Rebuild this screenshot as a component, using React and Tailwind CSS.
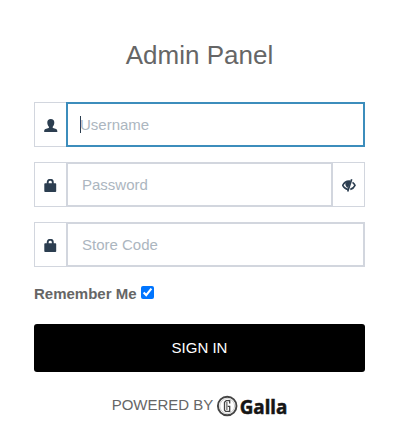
import React from "react";

function UserIcon() {
  return (
    <svg width="14" height="14" viewBox="0 0 14 14" fill="currentColor" className="block shrink-0">
      <path d="M6.800 0c2.300 0 3.500 1.300 3.500 3.500 0 1.700-.6 3-1.400 3.900-.4.500-.3 1.200.2 1.500l3 1.200c.8.400 1.200 1.100 1.200 2V13H.2v-.9c0-.9.5-1.600 1.300-2l3.100-1.200c.5-.3.5-1 .1-1.500-.8-.9-1.400-2.200-1.400-3.900C3.300 1.300 4.500 0 6.800 0z" />
    </svg>
  );
}

function LockIcon() {
  return (
    <svg width="14" height="14" viewBox="0 0 14 14" className="block shrink-0">
      <path d="M3.700 5.200V3.400C3.700 1.800 4.500.9 5.700.9h1c1.200 0 2.100.9 2.100 2.500v1.800" fill="none" stroke="currentColor" strokeWidth="1.900" />
      <path d="M1.100 4.200h10.300c.5 0 .8.400.8.900V12c0 .7-.5 1-1.100 1H1.400c-.6 0-1.100-.3-1.100-1V5.100c0-.5.3-.9.800-.9z" fill="currentColor" />
    </svg>
  );
}

function EyeIcon() {
  return (
    <svg width="14" height="14" viewBox="0 0 14 14" fill="none" stroke="currentColor" className="block shrink-0">
      <path d="M8.400 2.200C4.800 1.800 1.900 3.600.7 6.400c1.200 2.400 3 3.700 5.300 4.100" strokeWidth="1.600" />
      <path d="M10.500 3.300c1.200.8 2 1.800 2.500 3.100-1 2.200-2.600 3.500-4.700 4" strokeWidth="1.600" />
      <path d="M3.500 3.300c-.6 2.800.3 4.700 2.500 5.700l2.800-6.500z" fill="currentColor" stroke="none" />
      <path d="M9.700.3 5.700 12.400" strokeWidth="1.700" />
    </svg>
  );
}

function Addon({ children, end }) {
  return (
    <div className={`flex w-8 shrink-0 items-center border-y border-[#d2d6de] pt-[3px] text-[#2c3e50] ${end ? "border-r pl-[9px]" : "border-l pl-[9px]"}`}>
      {children}
    </div>
  );
}

function Field({ icon, placeholder, focused, end }) {
  return (
    <div className="flex h-[45px]">
      <Addon>{icon}</Addon>
      <div className={`flex min-w-0 flex-1 items-center border-2 ${focused ? "border-[#3c8dbc] pl-3" : "border-[#d2d6de] pl-[14px]"}`}>
        {focused && <span className="-mr-px h-[17px] w-px bg-[#2c3e50]" />}
        <input
          type="text"
          placeholder={placeholder}
          className="w-full min-w-0 bg-transparent pt-[2px] text-[15px] text-[#2c3e50] outline-none placeholder:text-[#acb6c0]"
        />
      </div>
      {end && <Addon end>{end}</Addon>}
    </div>
  );
}

function GallaLogo() {
  return (
    <span className="ml-[3px] flex h-[22px] shrink-0 items-center">
      <svg width="22" height="22" viewBox="0 0 22 22" className="block shrink-0">
        <circle cx="11.200" cy="11" r="9.300" fill="#fff" stroke="#444" strokeWidth="1.900" />
        <circle cx="11.200" cy="11" r="7.400" fill="none" stroke="#aaa" strokeWidth=".6" />
        <path d="M13.700 8.500V5.700h-3.500L8.500 7.200v8l1.200 1.200h4v-5h-2" fill="none" stroke="#444" strokeWidth="1.300" />
        <path d="M10.900 7v8" stroke="#444" strokeWidth="1" />
      </svg>
      <svg width="49" height="30" viewBox="0 0 49 30" className="block shrink-0 overflow-visible">
        <text x="1.700" y="22.500" textLength="47.500" lengthAdjust="spacingAndGlyphs" fill="#151515" stroke="#151515" strokeWidth=".5" style={{ fontFamily: '"Noto Sans", sans-serif', fontSize: 19, fontWeight: 700 }}>Galla</text>
      </svg>
    </span>
  );
}

export default function App() {
  return (
    <main className="flex h-[436px] w-[400px] flex-col bg-white pr-[35px] pl-[34px] font-['Liberation_Sans',Arial,sans-serif] text-[15px] text-[#666]">
      <h1 className="mt-[37px] h-[65px] text-center text-[26px] leading-[37px]">Admin Panel</h1>
      <form className="flex flex-col gap-[15px]">
        <Field icon={<UserIcon />} placeholder="Username" focused />
        <Field icon={<LockIcon />} placeholder="Password" end={<EyeIcon />} />
        <Field icon={<LockIcon />} placeholder="Store Code" />
      </form>
      <label className="mt-[17px] flex h-[21px] items-center font-bold">
        Remember Me
        <input type="checkbox" defaultChecked className="mb-[4px] ml-1 h-[13px] w-[13px]" />
      </label>
      <button type="button" className="mt-[19px] h-12 shrink-0 rounded-[3px] bg-black text-[15px] text-white">SIGN IN</button>
      <footer className="mt-[23px] flex h-[22px] items-center justify-center">
        <span className="-mt-[2px] whitespace-nowrap">POWERED BY</span>
        <GallaLogo />
      </footer>
    </main>
  );
}
